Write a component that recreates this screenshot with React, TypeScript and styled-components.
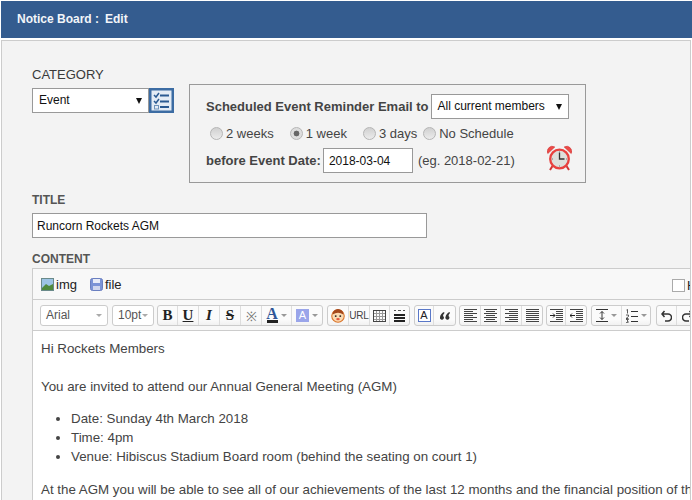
import styled, { createGlobalStyle } from "styled-components";
import type { ReactNode } from "react";

const Global = createGlobalStyle`
  html, body {
    margin: 0;
    background: #fff;
    overflow: hidden;
  }
  body {
    font-family: "Liberation Sans", Arial, sans-serif;
    color: #333;
  }
  * { box-sizing: border-box; }
`;

const Page = styled.div`
  width: 692px;
  height: 500px;
  padding: 1px 0 0 1px;
  overflow: hidden;
`;

const Header = styled.div`
  height: 37px;
  margin-bottom: 2px;
  background: #345c8f;
  color: #f2f5f9;
  font-size: 12px;
  font-weight: bold;
  line-height: 36px;
  padding-left: 16px;
  display: flex;
  gap: 6px;
`;

const Panel = styled.div`
  width: 690px;
  height: 470px;
  background: #f3f3f3;
  border: 1px solid #ccc;
  border-width: 1px 1px 0 1px;
  padding: 26px 0 0 30px;
  overflow: hidden;
`;

const CategoryLabel = styled.div`
  font-size: 13px;
  line-height: 15px;
  color: #3a3a3a;
`;

const Label = styled.div`
  font-size: 12px;
  font-weight: bold;
  line-height: 15px;
  color: #555;
`;

const TopRow = styled.div`
  display: flex;
  align-items: flex-start;
  height: 126px;
`;

const CategoryCol = styled.div`
  display: flex;
  flex-direction: column;
  gap: 6px;
  width: 157px;
`;

const CategoryPick = styled.div`
  display: flex;
`;

const SelectWrap = styled.div<{ $w: number }>`
  position: relative;
  width: ${(p) => p.$w}px;
  height: 25px;
  background: #fff;
  border: 1px solid #999;
  color: #111;
  font-size: 12px;
  font-weight: normal;
  line-height: 23px;
  padding-left: 6px;
`;

const SelectArrow = styled.span`
  position: absolute;
  right: 6px;
  top: 9px;
  width: 0;
  height: 0;
  border-left: 3px solid transparent;
  border-right: 3px solid transparent;
  border-top: 6px solid #111;
`;

const ReminderBox = styled.div`
  width: 397px;
  height: 99px;
  margin-top: 17px;
  border: 1px solid #999;
  padding: 9px 0 0 16px;
  color: #444;
  font-size: 13px;
`;

const ReminderLine = styled.div`
  display: flex;
  align-items: center;
  height: 25px;
  font-weight: bold;
  gap: 2px;
`;

const RadioLine = styled.div`
  display: flex;
  align-items: center;
  height: 29px;
  padding-left: 4px;
`;

const RadioItem = styled.span<{ $gap: number }>`
  display: inline-flex;
  align-items: center;
  gap: 3px;
  margin-right: ${(p) => p.$gap}px;
`;

const Radio = styled.span<{ $on?: boolean }>`
  width: 13px;
  height: 13px;
  border-radius: 50%;
  border: 1px solid #b5b5b5;
  background: ${(p) =>
    p.$on
      ? "radial-gradient(circle, #666 0 2.6px, #ddd 3.2px)"
      : "linear-gradient(#d0d0d0, #ececec)"};
`;

const DateLine = styled.div`
  display: flex;
  align-items: center;
  height: 25px;
  font-weight: bold;
`;

const DateInput = styled.input`
  width: 90px;
  height: 25px;
  margin: 0 5px 0 2px;
  padding: 0 0 0 5px;
  border: 1px solid #999;
  background: #fff;
  color: #111;
  font: 12px "Liberation Sans", Arial, sans-serif;
`;

const Hint = styled.span`
  font-weight: normal;
`;

const Clock = styled.svg`
  margin: -6px 0 0 32px;
`;

const TitleInput = styled.input`
  display: block;
  width: 395px;
  height: 25px;
  margin: 5px 0 14px;
  padding: 0 0 0 4px;
  border: 1px solid #999;
  background: #fff;
  color: #111;
  font: 12px "Liberation Sans", Arial, sans-serif;
`;

const Editor = styled.div`
  width: 700px;
  margin-top: 1px;
  background: #fff;
  border: 1px solid #ccc;
  border-width: 1px 0 0 1px;
`;

const AttachBar = styled.div`
  height: 31px;
  background: #f8f8f8;
  border-bottom: 1px solid #ccc;
  display: flex;
  align-items: center;
  padding-left: 8px;
  font-size: 13px;
  color: #222;
  position: relative;
`;

const Attach = styled.span`
  display: inline-flex;
  align-items: center;
  gap: 2px;
  margin-right: 13px;
`;

const HtmlToggle = styled.span`
  position: absolute;
  left: 639px;
  top: 9px;
  display: flex;
  align-items: center;
  gap: 2px;
`;

const CheckBox = styled.span`
  width: 13px;
  height: 13px;
  background: #fff;
  border: 1px solid #aaa;
`;

const ToolBar = styled.div`
  height: 31px;
  background: #f8f8f8;
  border-bottom: 1px solid #ccc;
  display: flex;
  align-items: flex-start;
  padding: 5px 0 0 7px;
`;

const Combo = styled.div<{ $w: number; $mr: number }>`
  position: relative;
  width: ${(p) => p.$w}px;
  height: 21px;
  margin-right: ${(p) => p.$mr}px;
  background: #fff;
  border: 1px solid #ccc;
  border-radius: 3px;
  font-size: 12px;
  line-height: 19px;
  color: #555;
  padding-left: 5px;
`;

const ComboArrow = styled.span`
  position: absolute;
  right: 5px;
  top: 8px;
  border-left: 3px solid transparent;
  border-right: 3px solid transparent;
  border-top: 3px solid #aaa;
`;

const Group = styled.div<{ $mr?: number }>`
  display: flex;
  flex: none;
  height: 21px;
  margin-right: ${(p) => p.$mr ?? 4}px;
  border: 1px solid #ccc;
  border-radius: 3px;
  background: linear-gradient(#fbfbfb 0 70%, #f1f1f1 100%);
`;

const Btn = styled.div<{ $w?: number }>`
  position: relative;
  flex: none;
  width: ${(p) => p.$w ?? 21}px;
  height: 19px;
  border-right: 1px solid #ddd;
  display: flex;
  align-items: center;
  justify-content: center;
  gap: 3px;
  color: #222;
  &:last-child { border-right: 0; }
`;

const Glyph = styled.span<{ $italic?: boolean; $under?: boolean; $strike?: boolean }>`
  font-family: "Liberation Serif", "Times New Roman", serif;
  font-size: 15px;
  font-weight: bold;
  font-style: ${(p) => (p.$italic ? "italic" : "normal")};
  text-decoration: ${(p) => (p.$under ? "underline" : p.$strike ? "line-through" : "none")};
  color: #222;
`;

const UrlText = styled.span`
  font-size: 10px;
  letter-spacing: -0.2px;
  color: #444;
`;

const Mark = styled.span`
  font-size: 13px;
  color: #777;
`;

const Caret = styled.span`
  border-left: 3px solid transparent;
  border-right: 3px solid transparent;
  border-top: 3px solid #999;
`;

const FontColor = styled.span`
  display: flex;
  flex-direction: column;
  align-items: center;
  font-family: "Liberation Serif", serif;
  font-weight: bold;
  font-size: 16px;
  line-height: 12px;
  color: #2f5597;
  &::after {
    content: "";
    width: 11px;
    height: 3px;
    background: #222;
  }
`;

const BackColor = styled.span`
  width: 13px;
  height: 13px;
  background: #9aa5ea;
  color: #fff;
  font-size: 11px;
  line-height: 13px;
  text-align: center;
`;

const StyleBox = styled.span`
  width: 13px;
  height: 13px;
  border: 1px solid #5a78c8;
  background: #fff;
  color: #222;
  font-size: 11px;
  line-height: 11px;
  text-align: center;
`;

const Body = styled.div`
  padding: 8px 8px 0 8px;
  height: 200px;
  font-size: 13.33px;
  line-height: 19px;
  color: #444;
  white-space: nowrap;
`;

const Para = styled.p`
  margin: 0 0 13.3px;
`;

const Blank = styled.div`
  height: 19px;
`;

const Bullets = styled.ul`
  margin: 0 0 13.3px;
  padding-left: 30px;
`;

function Lines({ rows, w = 13 }: { rows: [number, number, number][]; w?: number }) {
  return (
    <svg width={w} height="13" viewBox={`0 0 ${w} 13`} stroke="#444" strokeWidth="1" shapeRendering="crispEdges">
      {rows.map(([x1, x2, y]) => (
        <line key={y} x1={x1} x2={x2} y1={y + 0.5} y2={y + 0.5} />
      ))}
    </svg>
  );
}

const rowsAt = (pairs: [number, number][]) =>
  pairs.map(([a, b], i) => [a, b, i * 2] as [number, number, number]);

const alignLeft = rowsAt([[0, 13], [0, 9], [0, 13], [0, 9], [0, 13], [0, 9], [0, 13]]);
const alignCenter = rowsAt([[0, 13], [2, 11], [0, 13], [2, 11], [0, 13], [2, 11], [0, 13]]);
const alignRight = rowsAt([[0, 13], [4, 13], [0, 13], [4, 13], [0, 13], [4, 13], [0, 13]]);
const alignFull = rowsAt([[0, 13], [0, 13], [0, 13], [0, 13], [0, 13], [0, 13], [0, 13]]);

function Indent({ out }: { out?: boolean }) {
  return (
    <svg width="13" height="13" viewBox="0 0 13 13" fill="none" stroke="#444" shapeRendering="crispEdges">
      <path d="M0 .5h13M6 2.500h7M6 4.500h7M6 6.500h7M6 8.500h7M6 10.500h7M0 12.500h13" />
      <path d={out ? "M5 6.500H0M2 4.500 0 6.500 2 8.500" : "M0 6.500h5M3 4.500l2 2-2 2"} stroke="#222" shapeRendering="auto" />
    </svg>
  );
}

function Tool({ children, w }: { children: ReactNode; w?: number }) {
  return <Btn $w={w}>{children}</Btn>;
}

function ChecklistIcon() {
  return (
    <svg width="25" height="25" viewBox="0 0 25 25">
      <rect x="1.250" y="1.250" width="22.500" height="22.500" fill="#e4ecf5" stroke="#3c6ca3" strokeWidth="2.500" />
      <path d="M5 7l2 2 3-4M5 13l2 2 3-4" fill="none" stroke="#2a5a92" strokeWidth="1.500" />
      <rect x="5.500" y="17.500" width="4" height="3.500" fill="none" stroke="#6f93bb" />
      <path d="M11 7.500h9M11 13.500h9M11 19h9" stroke="#2a5a92" strokeWidth="1.800" />
    </svg>
  );
}

function AlarmClock() {
  return (
    <Clock width="25" height="26" viewBox="0 0 25 26">
      <path d="M.8 8.500a5 5 0 0 1 7-6.500zM24.200 8.500a5 5 0 0 0-7-6.500z" fill="#ee4a48" stroke="#cc2f2e" strokeWidth=".6" />
      <path d="M5.500 21l-2.500 4M19.500 21l2.500 4" stroke="#cf3635" strokeWidth="2" />
      <circle cx="12.500" cy="14" r="9.300" fill="#dedfdc" stroke="#e8413f" strokeWidth="2.300" />
      <path d="M12.500 7.500v6.500h5" fill="none" stroke="#333" strokeWidth="1.300" />
      <path d="M12.500 6.500v1M12.500 20.500v1M5 14h1M19 14h1" stroke="#777" />
    </Clock>
  );
}

function ImgIcon() {
  return (
    <svg width="13" height="13" viewBox="0 0 13 13">
      <rect x=".5" y=".5" width="12" height="12" fill="#9cc4e4" stroke="#6a8a8a" />
      <path d="M1 10l4-4 3 2 4-2v6H1z" fill="#4f8a3c" />
    </svg>
  );
}

function DiskIcon() {
  return (
    <svg width="13" height="13" viewBox="0 0 13 13">
      <rect x=".5" y=".5" width="12" height="12" rx="2" fill="#7b93d6" stroke="#6a7fc0" />
      <rect x="3" y="1" width="7" height="4" fill="#e8ecf8" />
      <rect x="3" y="8" width="7" height="4" fill="#cfd6ee" />
    </svg>
  );
}

function Smiley() {
  return (
    <svg width="14" height="14" viewBox="0 0 13 13">
      <circle cx="6.500" cy="6.500" r="5.800" fill="#fbd9b0" stroke="#d9742a" />
      <path d="M1.500 5a5 5 0 0 1 10 0q-5-3-10 0" fill="#a4481c" />
      <circle cx="4.400" cy="6.600" r=".9" fill="#222" />
      <circle cx="8.600" cy="6.600" r=".9" fill="#222" />
      <ellipse cx="6.500" cy="9.400" rx="1.600" ry="1.100" fill="#e2543d" />
    </svg>
  );
}

function TableIcon() {
  return (
    <svg width="13" height="12" viewBox="0 0 13 12" fill="none" shapeRendering="crispEdges">
      <path d="M.5 3.500h12M.5 6.500h12M.5 9.500h12M3.500.5v11M6.500.5v11M9.500.5v11" stroke="#999" />
      <rect x=".5" y=".5" width="12" height="11" stroke="#444" />
    </svg>
  );
}

function RuleIcon() {
  return (
    <svg width="11" height="12" viewBox="0 0 11 12" stroke="#222" shapeRendering="crispEdges">
      <path d="M0 .5h2M4 .5h3M9 .5h2" stroke="#555" />
      <path d="M0 4.500h11M0 7.500h11M0 10.500h11" strokeWidth="2" />
    </svg>
  );
}

function QuoteIcon() {
  return (
    <svg width="10" height="8" viewBox="0 0 10 8" fill="#333">
      <path d="M4 0C2 1 .5 2.500 0 5a2 2 0 1 0 3-1c0-1 .5-2 1.500-3zM9.500 0c-2 1-3.500 2.500-4 5a2 2 0 1 0 3-1c0-1 .5-2 1.500-3z" />
    </svg>
  );
}

function LineHeightIcon() {
  return (
    <svg width="12" height="13" viewBox="0 0 12 13" fill="none" stroke="#333">
      <path d="M0 .5h12M0 12.500h12" shapeRendering="crispEdges" />
      <path d="M6 2.500v8M4 4.500l2-2 2 2M4 8.500l2 2 2-2" />
    </svg>
  );
}

function NumberListIcon() {
  return (
    <svg width="13" height="14" viewBox="0 0 13 14" stroke="#333" fill="none">
      <path d="M6 2.500h7M6 7.500h7M6 12.500h7" shapeRendering="crispEdges" />
      <path d="M1.500 1l1-.5v4M1 6h2.500v1.500L1 9.500h2.500M1 10.500h2.500L2 12l1.500 1L1 13.800" strokeWidth=".8" />
    </svg>
  );
}

function UndoIcon({ redo }: { redo?: boolean }) {
  return (
    <svg width="11" height="12" viewBox="0 0 11 12" fill="none" stroke="#333" strokeWidth="1.500" style={redo ? { transform: "scaleX(-1)" } : undefined}>
      <path d="M1 4h6a3 3 0 0 1 0 7H4M3.500 1 1 4l2.500 3" />
    </svg>
  );
}

export default function App() {
  return (
    <>
      <Global />
      <Page>
        <Header>
          <span>Notice Board :</span>
          <span>Edit</span>
        </Header>
        <Panel>
          <TopRow>
            <CategoryCol>
              <CategoryLabel>CATEGORY</CategoryLabel>
              <CategoryPick>
                <SelectWrap $w={117}>
                  Event
                  <SelectArrow />
                </SelectWrap>
                <ChecklistIcon />
              </CategoryPick>
            </CategoryCol>
            <ReminderBox>
              <ReminderLine>
                <span>Scheduled Event Reminder Email to</span>
                <SelectWrap $w={138}>
                  All current members
                  <SelectArrow />
                </SelectWrap>
              </ReminderLine>
              <RadioLine>
                <RadioItem $gap={16}><Radio />2 weeks</RadioItem>
                <RadioItem $gap={16}><Radio $on />1 week</RadioItem>
                <RadioItem $gap={6}><Radio />3 days</RadioItem>
                <RadioItem $gap={0}><Radio />No Schedule</RadioItem>
              </RadioLine>
              <DateLine>
                <span>before Event Date:</span>
                <DateInput defaultValue="2018-03-04" />
                <Hint>(eg. 2018-02-21)</Hint>
                <AlarmClock />
              </DateLine>
            </ReminderBox>
          </TopRow>
          <Label>TITLE</Label>
          <TitleInput defaultValue="Runcorn Rockets AGM" />
          <Label>CONTENT</Label>
          <Editor>
            <AttachBar>
              <Attach><ImgIcon />img</Attach>
              <Attach><DiskIcon />file</Attach>
              <HtmlToggle><CheckBox />HTML</HtmlToggle>
            </AttachBar>
            <ToolBar>
              <Combo $w={68} $mr={4}>Arial<ComboArrow /></Combo>
              <Combo $w={42} $mr={3}>10pt<ComboArrow /></Combo>
              <Group>
                <Tool w={20}><Glyph>B</Glyph></Tool>
                <Tool><Glyph $under>U</Glyph></Tool>
                <Tool><Glyph $italic>I</Glyph></Tool>
                <Tool><Glyph $strike>S</Glyph></Tool>
                <Tool><Mark>※</Mark></Tool>
                <Tool w={30}><FontColor>A</FontColor><Caret /></Tool>
                <Tool w={30}><BackColor>A</BackColor><Caret /></Tool>
              </Group>
              <Group>
                <Tool><Smiley /></Tool>
                <Tool><UrlText>URL</UrlText></Tool>
                <Tool w={20}><TableIcon /></Tool>
                <Tool w={19}><RuleIcon /></Tool>
              </Group>
              <Group $mr={3}>
                <Tool w={19}><StyleBox>A</StyleBox></Tool>
                <Tool><QuoteIcon /></Tool>
              </Group>
              <Group $mr={3}>
                <Tool><Lines rows={alignLeft} /></Tool>
                <Tool w={20}><Lines rows={alignCenter} /></Tool>
                <Tool><Lines rows={alignRight} /></Tool>
                <Tool w={20}><Lines rows={alignFull} /></Tool>
              </Group>
              <Group>
                <Tool w={19}><Indent /></Tool>
                <Tool w={20}><Indent out /></Tool>
              </Group>
              <Group $mr={5}>
                <Tool w={30}><LineHeightIcon /><Caret /></Tool>
                <Tool w={28}><NumberListIcon /><Caret /></Tool>
              </Group>
              <Group $mr={0}>
                <Tool w={20}><UndoIcon /></Tool>
                <Tool w={21}><UndoIcon redo /></Tool>
              </Group>
            </ToolBar>
            <Body>
              <div>Hi Rockets Members</div>
              <Blank />
              <Para>You are invited to attend our Annual General Meeting (AGM)</Para>
              <Bullets>
                <li>Date: Sunday 4th March 2018</li>
                <li>Time: 4pm</li>
                <li>Venue: Hibiscus Stadium Board room (behind the seating on court 1)</li>
              </Bullets>
              <Para>At the AGM you will be able to see all of our achievements of the last 12 months and the financial position of the club.</Para>
            </Body>
          </Editor>
        </Panel>
      </Page>
    </>
  );
}
